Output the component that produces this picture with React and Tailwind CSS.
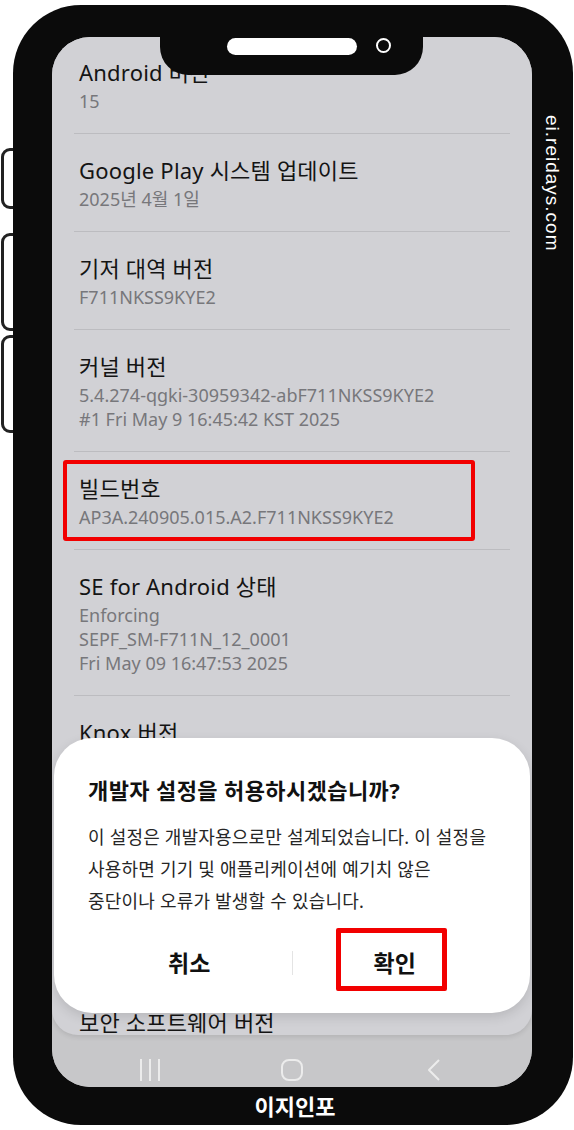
import React from 'react';

const items = [
  { title: 'Android 버전', lines: ['15'] },
  { title: 'Google Play 시스템 업데이트', lines: ['2025년 4월 1일'] },
  { title: '기저 대역 버전', lines: ['F711NKSS9KYE2'] },
  {
    title: '커널 버전',
    lines: ['5.4.274-qgki-30959342-abF711NKSS9KYE2', '#1 Fri May 9 16:45:42 KST 2025'],
  },
  { title: '빌드번호', lines: ['AP3A.240905.015.A2.F711NKSS9KYE2'], marked: true },
  {
    title: 'SE for Android 상태',
    lines: ['Enforcing', 'SEPF_SM-F711N_12_0001', 'Fri May 09 16:47:53 2025'],
  },
];

const Divider = () => <div className="mx-[22px] h-px bg-[#bcbcc0]" />;

const InfoItem = ({ item, first }) => (
  <div className={`relative px-[27px] pb-[20px] ${first ? 'pt-[20px]' : 'pt-[21px]'}`}>
    <p className="text-[22px] leading-[30px] tracking-[0.2px] text-[#141414]">{item.title}</p>
    <div className="mt-[2px]">
      {item.lines.map((line) => (
        <p key={line} className="text-[18px] leading-[24px] text-[#77777b]">
          {line}
        </p>
      ))}
    </div>
    {item.marked && (
      <div className="absolute left-[11px] top-[8px] w-[412px] h-[81px] border-[4px] border-[#f20000] rounded-[3px]" />
    )}
  </div>
);

const NavBar = () => (
  <div className="h-[52px] bg-[#c7c7c9] flex justify-center items-start pt-[24px] gap-[120px]">
    <div className="w-[22px] h-[22px] flex justify-center gap-[7px]">
      <span className="w-[2px] h-[22px] bg-[#ececec]" />
      <span className="w-[2px] h-[22px] bg-[#ececec]" />
      <span className="w-[2px] h-[22px] bg-[#ececec]" />
    </div>
    <div className="w-[22px] h-[22px] rounded-[8px] border-2 border-[#ececec]" />
    <div className="w-[22px] h-[22px] flex justify-center">
      <svg width="14" height="22" viewBox="0 0 14 22" fill="none">
        <polyline points="12,1 2,11 12,21" stroke="#ececec" strokeWidth="2" strokeLinejoin="round" />
      </svg>
    </div>
  </div>
);

const Dialog = () => (
  <div className="absolute left-[2px] right-[2px] top-[701px] h-[275px] bg-white rounded-[38px] shadow-[0_4px_12px_rgba(0,0,0,0.12)] px-[34px] pt-[37px]">
    <p className="text-[22px] leading-[30px] font-bold tracking-[0.4px] text-[#111]">개발자 설정을 허용하시겠습니까?</p>
    <div className="mt-[16px] text-[18px] leading-[32px] tracking-[0.2px] text-[#262626] whitespace-nowrap">
      <p>이 설정은 개발자용으로만 설계되었습니다. 이 설정을</p>
      <p>사용하면 기기 및 애플리케이션에 예기치 않은</p>
      <p>중단이나 오류가 발생할 수 있습니다.</p>
    </div>
    <div className="mt-[26px] h-[40px] flex items-center -mx-px">
      <button className="flex-1 text-[23px] font-bold text-[#111] leading-[40px]">취소</button>
      <span className="w-px h-[24px] bg-[#e4e4e4]" />
      <button className="flex-1 text-[23px] font-bold text-[#111] leading-[40px]">확인</button>
    </div>
    <div className="absolute left-[282px] top-[190px] w-[111px] h-[63px] border-[5px] border-[#f20000] rounded-[2px]" />
  </div>
);

const SideButton = ({ top, height }) => (
  <div
    className={`absolute left-[1px] w-[20px] border-[3px] border-[#222] rounded-l-[9px] bg-white ${top} ${height}`}
  />
);

export default function App() {
  return (
    <div className="relative w-[574px] h-[1130px] bg-white overflow-hidden pt-[5px] pl-[13px] font-[family-name:'Noto_Sans','Noto_Sans_CJK_KR',sans-serif]">
      <SideButton top="top-[148px]" height="h-[61px]" />
      <SideButton top="top-[233px]" height="h-[98px]" />
      <SideButton top="top-[335px]" height="h-[98px]" />

      <div className="relative w-[560px] h-[1120px] bg-[#0b0b0b] rounded-[68px] pt-[32px] pl-[39px] pr-[41px] flex flex-col">
        <div className="relative w-[480px] h-[1050px] rounded-[38px] overflow-hidden bg-[#c7c7c9] flex flex-col">
          <div className="relative h-[998px] bg-[#d1d1d5] rounded-b-[26px] overflow-hidden shadow-[0_2px_5px_rgba(0,0,0,0.1)] z-10">
            {items.map((item, i) => (
              <div key={item.title}>
                {i > 0 && <Divider />}
                <InfoItem item={item} first={i === 0} />
              </div>
            ))}
            <Divider />
            <div className="px-[27px] pt-[21px] pb-[20px]">
              <p className="text-[22px] leading-[30px] tracking-[0.2px] text-[#141414]">Knox 버전</p>
              <div className="h-[218px]" />
            </div>
            <Divider />
            <div className="px-[27px] pt-[23px]">
              <p className="text-[22px] leading-[26px] tracking-[0.2px] text-[#141414]">보안 소프트웨어 버전</p>
            </div>
            <Dialog />
          </div>
          <NavBar />

          <div className="absolute left-[108px] top-0 w-[263px] h-[38px] bg-[#0b0b0b] rounded-b-[28px] z-20">
            <div className="absolute left-[67px] top-[1px] w-[130px] h-[17px] rounded-full bg-white" />
            <div className="absolute left-[216px] top-[1px] w-[15px] h-[15px] rounded-full border-2 border-white" />
          </div>
        </div>

        <div className="flex-1 flex items-center justify-center">
          <p className="text-[22px] leading-[26px] font-bold text-white pl-[6px]">이지인포</p>
        </div>

        <p className="absolute left-[529px] top-[110px] [writing-mode:vertical-rl] text-[19px] leading-[20px] tracking-[1px] text-white font-['Liberation_Sans',Arial,sans-serif]">
          ei.reidays.com
        </p>
      </div>
    </div>
  );
}
